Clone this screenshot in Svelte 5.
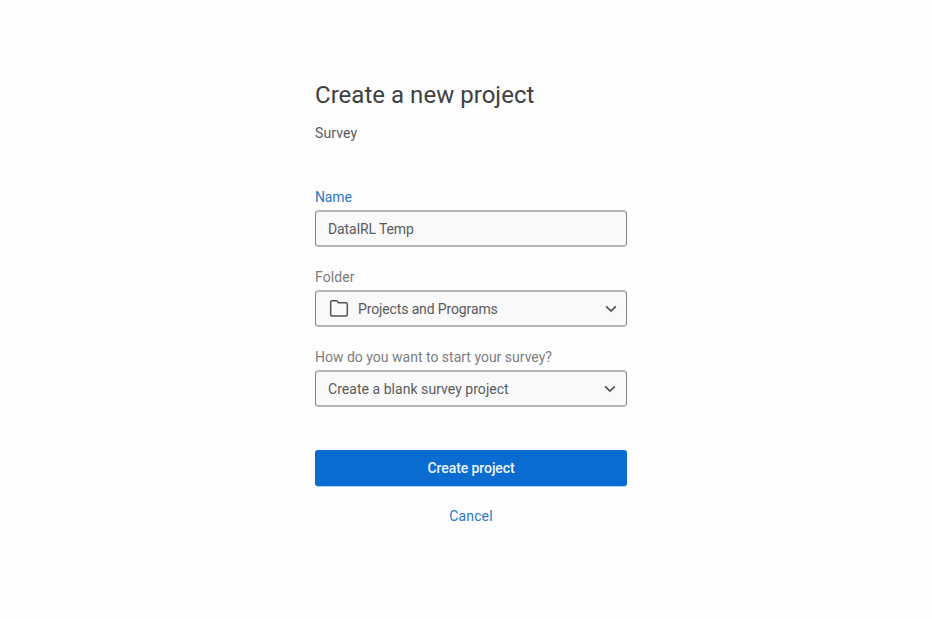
<script>
  let name = $state('DataIRL Temp');
</script>

{#snippet chevron()}
  <svg class="chevron" width="12" height="8" viewBox="0 0 12 8" aria-hidden="true">
    <path d="M1.2 1.3 6 6.1l4.8-4.8" />
  </svg>
{/snippet}

<main>
  <h1>Create a new project</h1>
  <p class="type">Survey</p>

  <form onsubmit={(event) => event.preventDefault()}>
    <div class="field">
      <label class="active" for="name"><span class="w-name">Name</span></label>
      <input id="name" class="box w-value" bind:value={name} />
    </div>

    <div class="field">
      <label for="folder"><span class="w-folder">Folder</span></label>
      <button id="folder" class="box select" type="button">
        <svg class="folder" width="20" height="18" viewBox="0 0 20 18" aria-hidden="true">
          <path d="M1.7 14.8V2.2Q1.7.8 3.1.8h4.2q.8 0 1.2.6l.9 1.4h7.5q1.4 0 1.4 1.4v10.6q0 1.2-1.4 1.2H3.1q-1.4 0-1.4-1.2Z" />
        </svg>
        <span class="w-projects">Projects and Programs</span>
        {@render chevron()}
      </button>
    </div>

    <div class="field">
      <label for="start"><span class="w-question">How do you want to start your survey?</span></label>
      <button id="start" class="box select last" type="button">
        <span class="w-blank">Create a blank survey project</span>
        {@render chevron()}
      </button>
    </div>

    <button class="primary" type="submit"><span class="w-create">Create project</span></button>
    <button class="cancel" type="button"><span class="w-cancel">Cancel</span></button>
  </form>
</main>

<style>
  :global(body) {
    background: #fdfdfd;
  }
  main {
    box-sizing: border-box;
    width: 312px;
    height: 619px;
    margin-left: 315px;
    padding-top: 79px;
    font: 14px/20px Roboto, 'Liberation Sans', sans-serif;
    color: #585b5d;
  }
  h1 {
    margin: 0;
    font-size: 24px;
    font-weight: 400;
    line-height: 32px;
    letter-spacing: 0.03px;
    color: #3d4042;
    white-space: nowrap;
  }
  p {
    margin: 12px 0 44px;
    letter-spacing: 0.1px;
  }
  form {
    display: flex;
    flex-direction: column;
  }
  .field {
    height: 80px;
  }
  label {
    display: block;
    height: 23px;
    color: #7b7e80;
  }
  label.active {
    color: #2878c3;
  }
  button,
  input {
    font: inherit;
    color: inherit;
    letter-spacing: inherit;
    outline: none;
  }
  .box {
    box-sizing: border-box;
    display: flex;
    align-items: center;
    width: 312px;
    height: 37px;
    padding: 0 12px;
    border: 1px solid #777;
    border-width: 2px 1px;
    border-color: #b4b4b4 #808080;
    border-radius: 4px;
    background: #f9f9f9;
    text-align: left;
  }
  .folder {
    margin: 0 9px 0 1px;
  }
  svg {
    fill: none;
    stroke: #505355;
    stroke-width: 1.5;
  }
  .chevron {
    margin-left: auto;
    margin-right: -3px;
    stroke-width: 1.7;
  }
  .last .chevron {
    margin-right: -2px;
  }
  .primary {
    height: 36px;
    margin-top: 23px;
    padding: 0;
    border: 0;
    border-radius: 3px;
    background: #0a6cd1;
    box-shadow: 0 1px #add3f5;
    color: #eef6ff;
    font-weight: 500;
  }
  .cancel {
    align-self: center;
    height: 20px;
    margin-top: 20px;
    padding: 0;
    border: 0;
    background: none;
    color: #2878c3;
  }
  .w-name {
    letter-spacing: -0.15px;
  }
  .w-value {
    letter-spacing: -0.14px;
  }
  .w-folder {
    letter-spacing: 0.1px;
  }
  .w-projects {
    letter-spacing: -0.13px;
  }
  .w-question {
    letter-spacing: 0;
  }
  .w-blank {
    letter-spacing: 0.04px;
  }
  .w-create {
    letter-spacing: -0.08px;
  }
  .w-cancel {
    letter-spacing: 0.15px;
  }
</style>
